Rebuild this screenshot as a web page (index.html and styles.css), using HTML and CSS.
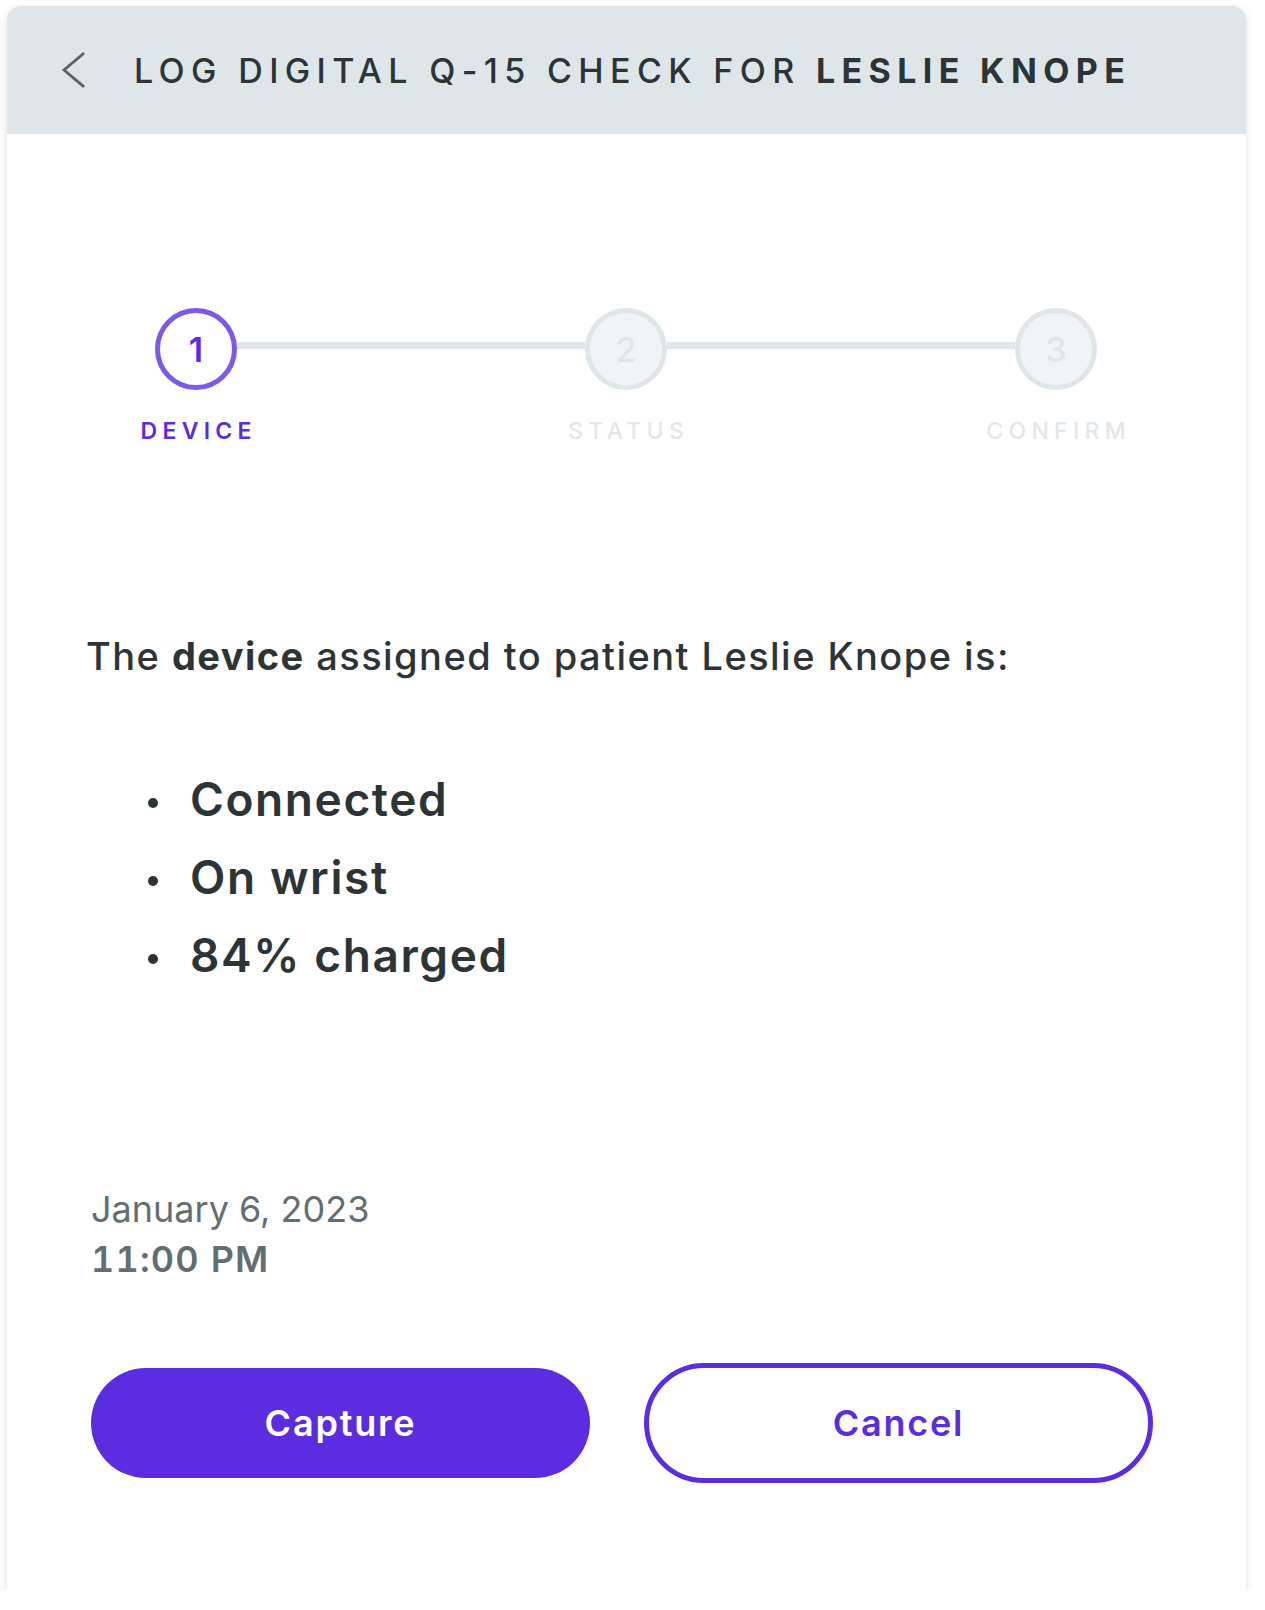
FILE: index.html
```html
<!DOCTYPE html>
<html lang="en">
<head>
<meta charset="utf-8">
<title>Log Digital Q-15 Check</title>
<link rel="stylesheet" href="styles.css">
</head>
<body>
<div class="card">
  <header class="header">
    <svg class="back" viewBox="0 0 24 36" width="24" height="36" aria-hidden="true">
      <polyline points="22,2 3,18 22,34" fill="none" stroke="#5f6060" stroke-width="2.8" stroke-linecap="square" stroke-linejoin="miter"/>
    </svg>
    <h1 class="title">LOG DIGITAL Q-15 CHECK FOR <b>LESLIE KNOPE</b></h1>
  </header>

  <main class="body">
    <div class="stepper">
      <div class="step active">
        <div class="circle">1</div>
        <div class="label">DEVICE</div>
      </div>
      <div class="line"></div>
      <div class="step">
        <div class="circle">2</div>
        <div class="label">STATUS</div>
      </div>
      <div class="line"></div>
      <div class="step">
        <div class="circle">3</div>
        <div class="label">CONFIRM</div>
      </div>
    </div>

    <p class="intro">The <b>device</b> assigned to patient Leslie Knope is:</p>

    <ul class="status">
      <li>Connected</li>
      <li>On wrist</li>
      <li>84% charged</li>
    </ul>

    <div class="stamp">
      <div class="date">January 6, 2023</div>
      <div class="time">11:00 PM</div>
    </div>

    <div class="actions">
      <button class="btn primary" type="button">Capture</button>
      <button class="btn outline" type="button">Cancel</button>
    </div>
  </main>
</div>
</body>
</html>
```

FILE: styles.css
```css
* { box-sizing: border-box; }

html, body {
  margin: 0;
  padding: 0;
  background: #ffffff;
}

body {
  font-family: Inter, "Noto Sans", sans-serif;
  color: #2d3436;
}

.card {
  margin: 6px 0 0 7px;
  width: 1239px;
  height: 1584px;
  background: #ffffff;
  border-radius: 14px 14px 0 0;
  box-shadow: 0 3px 10px rgba(0, 0, 0, 0.13);
  overflow: hidden;
}

/* Header */
.header {
  height: 128px;
  background: #dfe6e9;
  display: flex;
  align-items: center;
  padding-left: 54px;
}

.back {
  display: block;
  flex: none;
}

.title {
  margin: 0 0 0 49px;
  font-size: 34px;
  font-weight: 500;
  letter-spacing: 0.187em;
  color: #2d3436;
  white-space: nowrap;
}

.title b {
  font-weight: 700;
}

/* Body */
.body {
  padding: 174px 0 0 0;
}

/* Stepper */
.stepper {
  display: grid;
  grid-template-columns: 160px 1fr 160px 1fr 160px;
  margin: 0 110px 0 109px;
}

.step {
  display: flex;
  flex-direction: column;
  align-items: center;
}

.circle {
  position: relative;
  z-index: 1;
  width: 82px;
  height: 82px;
  border-radius: 50%;
  border: 5px solid #dfe6e9;
  background: #f1f4f5;
  color: #dfe6e9;
  font-size: 34px;
  font-weight: 500;
  display: flex;
  align-items: center;
  justify-content: center;
}

.step.active .circle {
  border-color: #7d58ea;
  background: #ffffff;
  color: #5b2be0;
  font-weight: 600;
}

.label {
  margin-top: 27px;
  font-size: 23px;
  font-weight: 500;
  letter-spacing: 0.23em;
  padding-left: 0.23em;
  color: #e1e7ea;
  white-space: nowrap;
}

.step.active .label {
  color: #5b2be0;
  font-weight: 600;
}

.line {
  height: 7px;
  margin: 34px -39px 0;
  background: #dfe6e9;
}

/* Intro */
.intro {
  margin: 188px 0 0 79px;
  font-size: 38px;
  font-weight: 500;
  line-height: 46px;
  letter-spacing: 1.45px;
  color: #2d3436;
}

.intro b {
  font-weight: 700;
}

/* Status list */
.status {
  list-style: none;
  margin: 81px 0 0 141px;
  padding: 0;
  font-size: 46px;
  font-weight: 600;
  line-height: 78px;
  letter-spacing: 1.6px;
  color: #2d3436;
}

.status li::before {
  content: "";
  display: inline-block;
  width: 10px;
  height: 10px;
  border-radius: 50%;
  background: #2d3436;
  vertical-align: middle;
  margin-right: 32px;
}

/* Date / time */
.stamp {
  margin: 190px 0 0 84px;
  font-size: 36px;
  line-height: 50px;
  color: #636e72;
}

.date {
  font-weight: 400;
}

.time {
  font-weight: 600;
  font-feature-settings: "tnum" 1;
  letter-spacing: 1.2px;
}

/* Buttons */
.actions {
  margin: 79px 0 0 84px;
  display: grid;
  grid-template-columns: 499px 509px;
  column-gap: 54px;
  align-items: center;
}

.btn {
  font-family: Inter, "Noto Sans", sans-serif;
  font-size: 36px;
  font-weight: 600;
  letter-spacing: 0.05em;
  border-radius: 60px;
  cursor: pointer;
  padding: 0;
}

.btn.primary {
  height: 110px;
  background: #5c2ce1;
  color: #ffffff;
  border: none;
}

.btn.outline {
  height: 120px;
  background: #ffffff;
  color: #5c2ce1;
  border: 5px solid #5c2ce1;
}
```
